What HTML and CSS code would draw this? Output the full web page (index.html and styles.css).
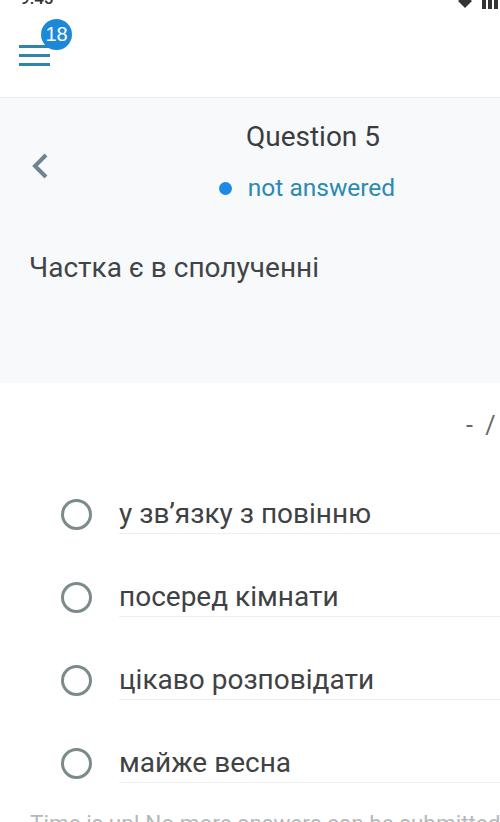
FILE: index.html
```html
<!DOCTYPE html>
<html lang="uk">
<head>
    <meta charset="UTF-8">
    <meta name="viewport" content="width=device-width, initial-scale=1.0">
    <title>Question 5</title>
    <link rel="stylesheet" href="styles.css">
</head>
<body>
    <div class="screen">
        <div class="statusbar">
            <span class="clock">9:45</span>
            <svg class="sys-icons" width="44" height="22" viewBox="0 0 44 22">
                <path d="M2 14 Q9 8 16 14 L9 21 Z" fill="#333"/>
                <rect x="26" y="12" width="4" height="10" fill="#333"/>
                <rect x="32" y="8" width="4" height="14" fill="#333"/>
                <rect x="38" y="4" width="4" height="18" fill="#333"/>
            </svg>
        </div>

        <header class="topbar">
            <button class="menu">
                <span class="bar"></span>
                <span class="bar"></span>
                <span class="bar"></span>
                <span class="badge">18</span>
            </button>
        </header>

        <section class="question">
            <div class="quiz-head">
                <div class="back">
                    <svg width="20" height="26" viewBox="0 0 20 26">
                        <path d="M16 2 L5 13 L16 24" fill="none" stroke="#718390" stroke-width="4"/>
                    </svg>
                </div>
                <div class="title">
                    <div class="number">Question 5</div>
                    <div class="state"><span class="dot"></span>not answered</div>
                </div>
                <div></div>
            </div>
            <p class="prompt">Частка є в сполученні</p>
        </section>

        <div class="score">-  /  1</div>

        <ul class="options">
            <li class="option"><span class="radio"></span><span class="label">у зв’язку з повінню</span></li>
            <li class="option"><span class="radio"></span><span class="label">посеред кімнати</span></li>
            <li class="option"><span class="radio"></span><span class="label">цікаво розповідати</span></li>
            <li class="option"><span class="radio"></span><span class="label">майже весна</span></li>
        </ul>

        <p class="notice">Time is up! No more answers can be submitted.</p>
    </div>
</body>
</html>
```

FILE: styles.css
```css
body {
    margin: 0;
    overflow: hidden;
    background-color: white;
    font-family: Roboto, "Noto Sans", sans-serif;
}
.screen {
    width: 626px;
    padding-top: 1px;
    margin-top: -1px;
}
.statusbar {
    height: 22px;
    margin-top: -13px;
    display: flex;
    justify-content: space-between;
    align-items: flex-end;
    padding: 0 0 0 20px;
    width: 480px;
}
.clock {
    font-size: 17px;
    font-weight: 500;
    color: #333;
    line-height: 22px;
}
.sys-icons {
    display: block;
}
.topbar {
    box-sizing: border-box;
    height: 89px;
    padding: 36px 0 0 19px;
    border-bottom: 1px solid #eceef1;
}
.menu {
    position: relative;
    margin: 0;
    padding: 0;
    width: 32px;
    height: 21px;
    border: none;
    background: none;
    display: flex;
    flex-direction: column;
    justify-content: space-between;
}
.bar {
    display: block;
    width: 31px;
    height: 3px;
    background-color: #2f86ad;
}
.badge {
    position: absolute;
    left: 22px;
    top: -26px;
    width: 31px;
    height: 31px;
    border-radius: 50%;
    background-color: #1c88d8;
    color: white;
    font-size: 20px;
    font-weight: 500;
    line-height: 31px;
    text-align: center;
}
.question {
    background-color: #f8f9fb;
    padding: 24px 0 100px 0;
}
.quiz-head {
    display: grid;
    grid-template-columns: 1fr auto 1fr;
    align-items: center;
}
.back {
    padding-left: 30px;
    padding-top: 6px;
}
.back svg {
    display: block;
}
.title {
    text-align: center;
}
.number {
    font-size: 28px;
    line-height: 30px;
    color: #3a3d40;
}
.state {
    margin-top: 21px;
    font-size: 24.5px;
    line-height: 30px;
    color: #2b8ab3;
    display: flex;
    align-items: center;
    justify-content: center;
    gap: 16px;
    margin-right: 12px;
}
.dot {
    width: 13px;
    height: 13px;
    border-radius: 50%;
    background-color: #1e88e5;
}
.prompt {
    margin: 50px 0 0 29px;
    font-size: 28px;
    line-height: 30px;
    color: #414446;
}
.score {
    margin-top: 28px;
    padding-left: 466px;
    font-size: 25px;
    line-height: 30px;
    color: #666;
    white-space: pre;
}
.options {
    list-style: none;
    margin: 58px 0 0 0;
    padding: 0 0 0 61px;
}
.option {
    display: flex;
    align-items: flex-start;
    gap: 27px;
    margin-bottom: 48px;
}
.radio {
    box-sizing: border-box;
    width: 31px;
    height: 31px;
    border: 3px solid #7b8a8b;
    border-radius: 50%;
    flex-shrink: 0;
}
.label {
    flex: 1;
    font-size: 28px;
    line-height: 30px;
    color: #3f4244;
    padding-bottom: 4px;
    border-bottom: 1px solid #eeeff0;
}
.notice {
    margin: -21px 0 0 30px;
    font-size: 22.5px;
    line-height: 26px;
    color: #b5b8ba;
}
```
